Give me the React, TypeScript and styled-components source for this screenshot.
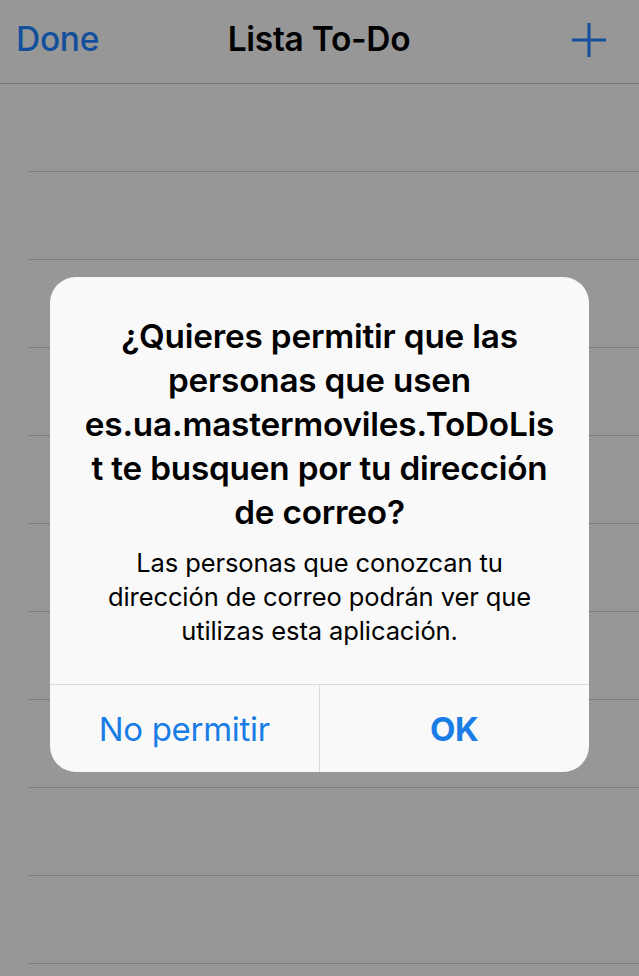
import React from "react";
import styled, { createGlobalStyle } from "styled-components";

const Global = createGlobalStyle`
  html, body { margin: 0; padding: 0; background: #979797; }
  body { font-family: Inter, "Noto Sans", sans-serif; -webkit-font-smoothing: antialiased; }
  * { box-sizing: border-box; }
`;

const Screen = styled.div`
  position: relative;
  width: 639px;
  height: 976px;
  overflow: hidden;
  background: #979797;
`;

const NavBar = styled.header`
  height: 84px;
  display: grid;
  grid-template-columns: 1fr auto 1fr;
  align-items: center;
  padding: 0 17px 6px 16px;
  border-bottom: 1px solid #7a7a7a;
  background: #979797;
`;

const NavButton = styled.span`
  font-size: 33.5px;
  font-weight: 500;
  color: #134f9c;
  letter-spacing: -0.3px;
`;

const NavTitle = styled.h1`
  margin: 0;
  font-size: 33.5px;
  font-weight: 600;
  color: #000;
  letter-spacing: -0.3px;
`;

const PlusWrap = styled.span`
  justify-self: end;
  display: flex;
  margin-right: 15px;
  margin-top: 2px;
`;

const List = styled.div`
  display: flex;
  flex-direction: column;
`;

const Row = styled.div`
  height: 88px;
  margin-left: 29px;
  border-bottom: 1px solid #7b7b7b;
`;

const Alert = styled.div`
  position: absolute;
  top: 277px;
  left: 50px;
  width: 539px;
  border-radius: 26px;
  background: #f9f9f9;
  overflow: hidden;
  display: flex;
  flex-direction: column;
`;

const AlertBody = styled.div`
  padding: 37px 24px 36px;
  text-align: center;
  color: #000;
`;

const AlertTitle = styled.div`
  font-size: 33.3px;
  font-weight: 600;
  line-height: 44px;
  letter-spacing: -0.2px;
`;

const AlertMessage = styled.div`
  margin-top: 12px;
  font-size: 25.5px;
  font-weight: 400;
  line-height: 34px;
  letter-spacing: -0.1px;
`;

const Buttons = styled.div`
  display: grid;
  grid-template-columns: 1fr 1fr;
  border-top: 1px solid #dcdce0;
  height: 88px;
`;

const AlertButton = styled.button<{ $bold?: boolean; $divider?: boolean }>`
  appearance: none;
  border: none;
  background: transparent;
  font-family: inherit;
  font-size: 33px;
  font-weight: ${(p) => (p.$bold ? 700 : 400)};
  color: #1a7de6;
  letter-spacing: -0.3px;
  border-right: ${(p) => (p.$divider ? "1px solid #dcdce0" : "none")};
  padding: 0;
`;

export default function App() {
  return (
    <>
      <Global />
      <Screen>
        <NavBar>
          <NavButton>Done</NavButton>
          <NavTitle>Lista To-Do</NavTitle>
          <PlusWrap>
            <svg width="36" height="36" viewBox="0 0 36 36">
              <path d="M18 1 V35 M1 18 H35" stroke="#134f9c" strokeWidth="3" fill="none" />
            </svg>
          </PlusWrap>
        </NavBar>
        <List>
          {Array.from({ length: 10 }).map((_, i) => (
            <Row key={i} />
          ))}
        </List>
        <Alert>
          <AlertBody>
            <AlertTitle>
              ¿Quieres permitir que las
              <br />
              personas que usen
              <br />
              es.ua.mastermoviles.ToDoLis
              <br />
              t te busquen por tu dirección
              <br />
              de correo?
            </AlertTitle>
            <AlertMessage>
              Las personas que conozcan tu
              <br />
              dirección de correo podrán ver que
              <br />
              utilizas esta aplicación.
            </AlertMessage>
          </AlertBody>
          <Buttons>
            <AlertButton $divider>No permitir</AlertButton>
            <AlertButton $bold>OK</AlertButton>
          </Buttons>
        </Alert>
      </Screen>
    </>
  );
}
